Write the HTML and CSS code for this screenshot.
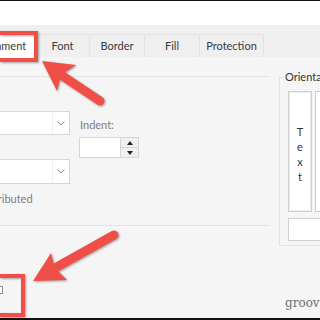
FILE: index.html
```html
<!DOCTYPE html>
<html lang="en">
<head>
  <meta charset="UTF-8">
  <title>Format Cells - Alignment</title>
  <link rel="stylesheet" href="styles.css">
</head>
<body>
  <div class="frame">
    <div class="topstrip"></div>

    <!-- tab bar -->
    <div class="tabbar">
      <div class="tab tab-align active">Alignment</div>
      <div class="tab tab-font">Font</div>
      <div class="tab tab-border">Border</div>
      <div class="tab tab-fill">Fill</div>
      <div class="tab tab-prot">Protection</div>
    </div>

    <div class="panel">
      <div class="leftcol">
        <div class="textalign">
          <div class="col-a">
            <div class="select">
              <span class="val"></span>
              <span class="chev"><svg width="8" height="5" viewBox="0 0 8 5"><path d="M0.5 0.5 L4 4 L7.5 0.5" fill="none" stroke="#8a8a8a" stroke-width="1"/></svg></span>
            </div>
            <div class="select s2">
              <span class="val"></span>
              <span class="chev"><svg width="8" height="5" viewBox="0 0 8 5"><path d="M0.5 0.5 L4 4 L7.5 0.5" fill="none" stroke="#8a8a8a" stroke-width="1"/></svg></span>
            </div>
            <div class="note">Justify distributed</div>
          </div>
          <div class="col-b">
            <div class="label">Indent:</div>
            <div class="spin">
              <span class="field"></span>
              <span class="btns">
                <span class="up"></span>
                <span class="down"></span>
              </span>
            </div>
          </div>
        </div>
        <div class="control"><span class="mini"></span></div>
      </div>

      <fieldset class="orient">
        <legend>Orientation</legend>
        <div class="dials">
          <div class="vtext"><span>T</span><span>e</span><span>x</span><span>t</span></div>
          <div class="dial"></div>
        </div>
        <div class="deg"></div>
      </fieldset>
    </div>

    <!-- callouts -->
    <svg class="marks" width="320" height="320" viewBox="0 0 320 320">
      <rect x="-4" y="33" width="40" height="27" fill="none" stroke="#ef4f46" stroke-width="4"/>
      <rect x="-4" y="276" width="27" height="39" fill="none" stroke="#ef4f46" stroke-width="4"/>
      <line x1="61" y1="75" x2="100" y2="101" stroke="#ef4f46" stroke-width="9" stroke-linecap="round"/>
      <polygon points="42,61 76,65 61,75 57,91" fill="#ef4f46"/>
      <line x1="55" y1="268" x2="114" y2="235" stroke="#ef4f46" stroke-width="9" stroke-linecap="round"/>
      <polygon points="33,281 51,253 55,268 67,280" fill="#ef4f46"/>
    </svg>

    <div class="watermark">groovyPost</div>
  </div>
</body>
</html>
```

FILE: styles.css
```css
:root {
  --bar:     #efefef;
  --panel:   #f5f5f5;
  --line:    #e3e3e3;
  --box:     #d6d6d6;
  --muted:   #7d7d7d;
  --font:    'Lato', 'Liberation Sans', sans-serif;
}
* { box-sizing: border-box; }
body { margin:0; background:#000; font-family:var(--font); }

.frame {
  position:relative;
  width:320px; height:320px;
  overflow:hidden;
  border-top:1px solid #111;
  border-bottom:2px solid #111;
  background:var(--panel);
  display:flex; flex-direction:column;
}
.topstrip { height:24px; background:#fff; flex-shrink:0; }

/* tabs */
.tabbar {
  height:32px;
  padding-top:9px;
  background:var(--bar);
  display:flex;
  margin-left:-32px;
  flex-shrink:0;
}
.tab {
  flex-shrink:0;
  height:23px;
  border:1px solid var(--line);
  border-bottom:none;
  margin-left:-1px;
  font-size:11px;
  line-height:21px;
  color:#3a3a3a;
  text-align:center;
  white-space:nowrap;
}
.tab.active { background:#fff; height:24px; }
.tab-align  { width:69px; }
.tab-font   { width:55px; }
.tab-border { width:56px; }
.tab-fill   { width:56px; }
.tab-prot   { width:65px; }

/* panel */
.panel { flex:1; display:flex; align-items:flex-start; }
.leftcol { width:270px; flex-shrink:0; padding-top:19px; }
.textalign {
  height:150px;
  border-top:1px solid var(--line);
  border-bottom:1px solid var(--line);
  display:flex;
}
.col-a { width:90px; flex-shrink:0; margin-left:-20px; padding-top:34px; }
.select {
  height:24px;
  background:#fff;
  border:1px solid var(--box);
  display:flex;
}
.select.s2 { margin-top:24px; height:25px; }
.select .val { flex:1; }
.select .chev {
  width:17px;
  border-left:1px solid #f0f0f0;
  display:flex; align-items:center; justify-content:center;
}
.note {
  margin-top:8px;
  margin-left:-34px;
  font-size:11px; line-height:14px;
  color:var(--muted);
  white-space:nowrap;
}
.col-b { width:60px; flex-shrink:0; margin-left:9px; padding-top:41px; }
.label { font-size:11px; line-height:14px; color:var(--muted); padding-left:1px; }
.spin {
  margin-top:5px;
  height:21px;
  display:flex;
  border:1px solid var(--box);
}
.spin .field { flex:1; background:#fff; }
.spin .btns {
  width:18px;
  border-left:1px solid var(--box);
  background:#f0f0f0;
  display:flex; flex-direction:column;
}
.spin .btns span { flex:1; display:flex; align-items:center; justify-content:center; }
.spin .up { border-bottom:1px solid var(--box); }
.spin .up::after, .spin .down::after {
  content:"";
  border-left:3px solid transparent;
  border-right:3px solid transparent;
}
.spin .up::after   { border-bottom:4px solid #222; }
.spin .down::after { border-top:4px solid #222; }

.control { padding-top:60px; }
.mini {
  display:block;
  width:10px; height:8px;
  margin-left:-7px;
  border:1px solid #8c8c8c;
  background:#fff;
}

/* orientation */
.orient {
  flex-shrink:0;
  margin:13px 0 0 9px;
  padding:7px 0 4px 8px;
  border:1px solid var(--line);
  min-width:0;
  width:80px;
}
.orient legend {
  margin-left:-4px;
  padding:0 1px;
  font-size:11px; line-height:14px;
  color:#333;
  white-space:nowrap;
}
.dials { display:flex; gap:3px; }
.vtext {
  flex-shrink:0;
  width:24px; height:121px;
  background:#fff;
  border:1px solid #cfcfcf;
  box-shadow:inset 0 0 0 1px #ececec;
  display:flex; flex-direction:column; align-items:center;
  padding-top:32px;
  font-size:11px; line-height:15px;
  color:#333;
}
.dial {
  flex-shrink:0;
  width:40px; height:121px;
  background:#fff;
  border:1px solid #cfcfcf;
}
.deg {
  margin-top:6px;
  width:60px; height:23px;
  background:#fff;
  border:1px solid #d0d0d0;
}

/* overlays */
.marks {
  position:absolute; top:-1px; left:0;
  pointer-events:none;
  filter:drop-shadow(1px 1px 1px rgba(0,0,0,.35));
}
.watermark {
  position:absolute; left:285px; top:295px;
  font-family:'DejaVu Serif', 'Liberation Serif', serif;
  font-size:12px;
  color:#6f6f6f;
  white-space:nowrap;
}
```
